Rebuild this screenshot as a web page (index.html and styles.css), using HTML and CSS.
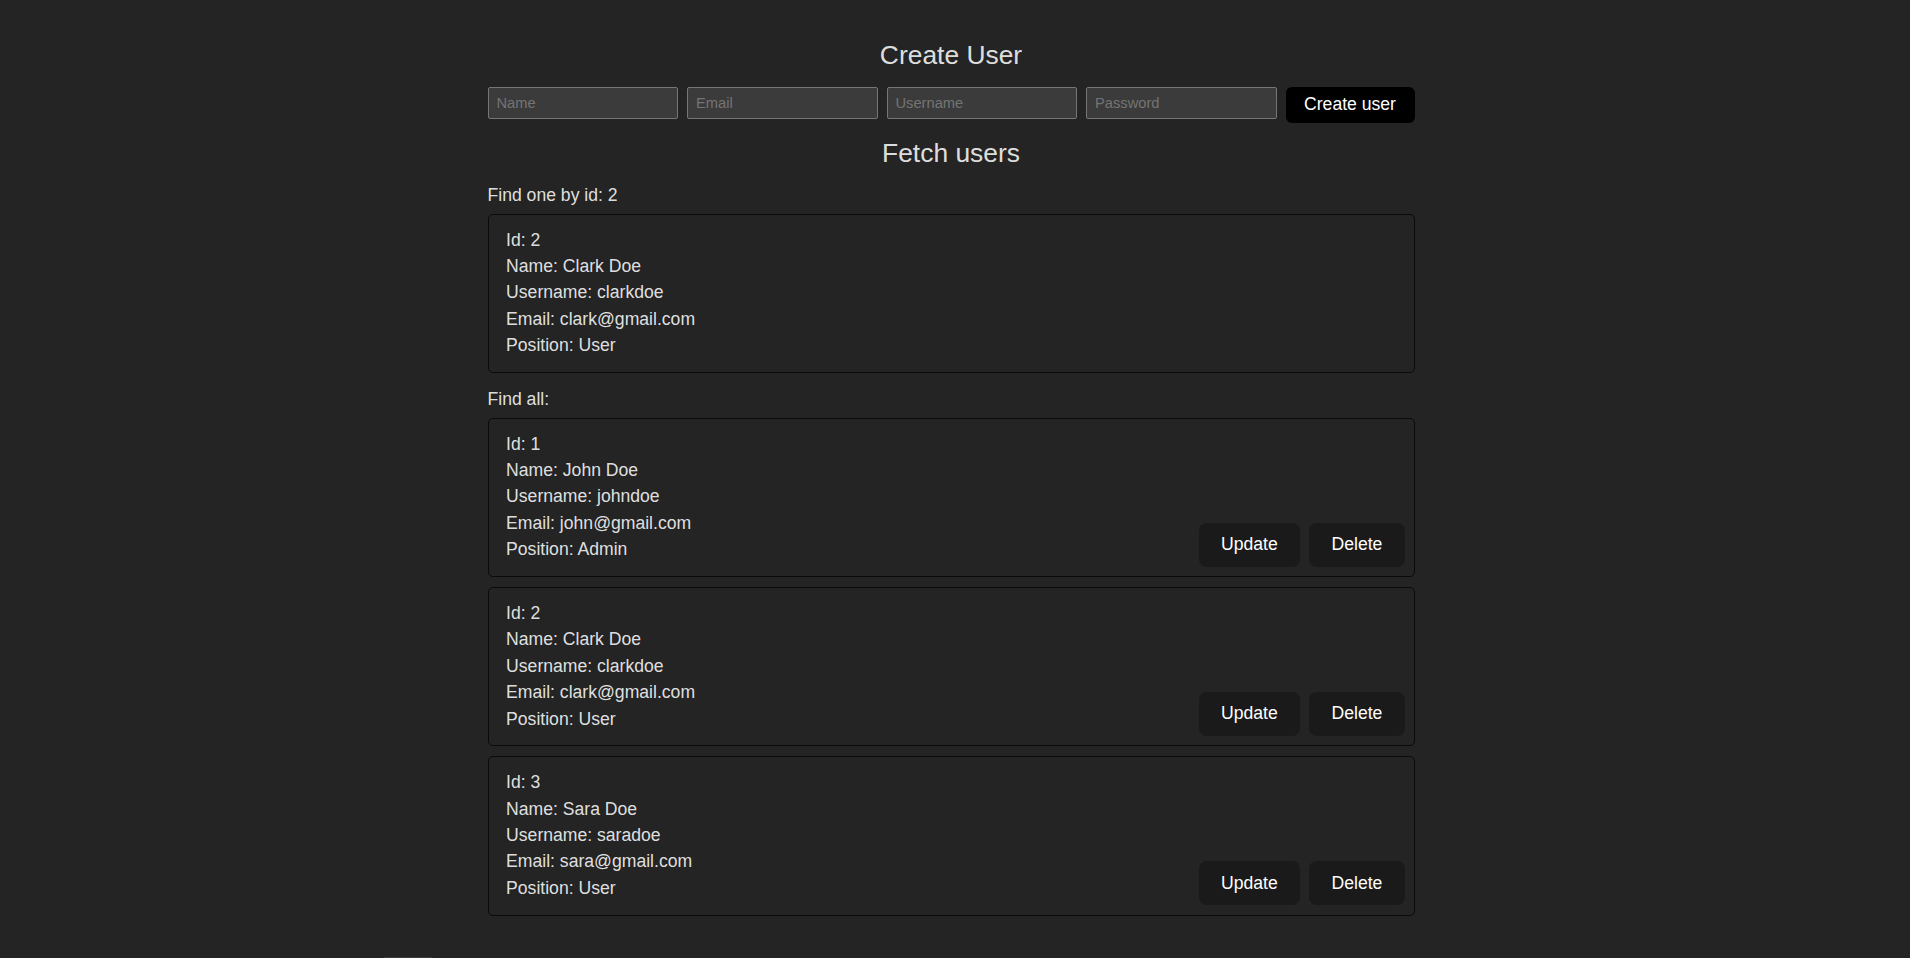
FILE: index.html
```html
<!DOCTYPE html>
<html lang="en">
<head>
<meta charset="utf-8">
<title>Users</title>
<link rel="stylesheet" href="styles.css">
</head>
<body>
<main class="app">
  <h1 class="title">Create User</h1>
  <form class="create-form">
    <input class="field" type="text" placeholder="Name">
    <input class="field" type="email" placeholder="Email">
    <input class="field" type="text" placeholder="Username">
    <input class="field" type="password" placeholder="Password">
    <button class="btn-create" type="button">Create user</button>
  </form>

  <h2 class="title title-fetch">Fetch users</h2>

  <p class="label">Find one by id: 2</p>
  <div class="card">
    <div class="info">
      <div>Id: 2</div>
      <div>Name: Clark Doe</div>
      <div>Username: clarkdoe</div>
      <div>Email: clark@gmail.com</div>
      <div>Position: User</div>
    </div>
  </div>

  <p class="label label-all">Find all:</p>
  <div class="card">
    <div class="info">
      <div>Id: 1</div>
      <div>Name: John Doe</div>
      <div>Username: johndoe</div>
      <div>Email: john@gmail.com</div>
      <div>Position: Admin</div>
    </div>
    <div class="actions">
      <button class="btn" type="button">Update</button>
      <button class="btn" type="button">Delete</button>
    </div>
  </div>
  <div class="card">
    <div class="info">
      <div>Id: 2</div>
      <div>Name: Clark Doe</div>
      <div>Username: clarkdoe</div>
      <div>Email: clark@gmail.com</div>
      <div>Position: User</div>
    </div>
    <div class="actions">
      <button class="btn" type="button">Update</button>
      <button class="btn" type="button">Delete</button>
    </div>
  </div>
  <div class="card">
    <div class="info">
      <div>Id: 3</div>
      <div>Name: Sara Doe</div>
      <div>Username: saradoe</div>
      <div>Email: sara@gmail.com</div>
      <div>Position: User</div>
    </div>
    <div class="actions">
      <button class="btn" type="button">Update</button>
      <button class="btn" type="button">Delete</button>
    </div>
  </div>
</main>
<div class="edge-strip"></div>
</body>
</html>
```
FILE: styles.css
```css
html, body {
  margin: 0;
  padding: 0;
}

body {
  background: #242424;
  color: rgba(255, 255, 255, 0.87);
  font-family: "Liberation Sans", Arial, Helvetica, sans-serif;
  font-size: 17.6px;
  line-height: 26.4px;
  overflow: hidden;
}

.app {
  width: 927px;
  margin-left: calc(50% - 467.5px);
  padding-top: 36px;
}

.title {
  margin: 0;
  font-size: 26.4px;
  font-weight: normal;
  line-height: 39.6px;
  text-align: center;
}

.create-form {
  display: flex;
  align-items: flex-start;
  gap: 9px;
  margin: 11.4px 0 0;
}

.field {
  flex: 1;
  min-width: 0;
  box-sizing: border-box;
  height: 32px;
  margin: 0;
  padding: 0 8px;
  background: #3b3b3b;
  border: 1px solid #767676;
  border-radius: 2px;
  color: rgba(255, 255, 255, 0.87);
  font-family: "Liberation Sans", Arial, sans-serif;
  font-size: 14.7px;
}

.field::placeholder {
  color: #747474;
}

.btn-create {
  flex: none;
  box-sizing: border-box;
  width: 129px;
  height: 36px;
  padding: 0 18px;
  background: #000;
  color: #fff;
  border: 0;
  border-radius: 6px;
  font-family: "Liberation Sans", Arial, sans-serif;
  font-size: 17.6px;
}

.title-fetch {
  margin-top: 11.4px;
}

.label {
  margin: 7.6px 0 5.6px;
}

.label-all {
  margin-top: 13px;
  margin-bottom: 5.3px;
}

.card {
  display: flex;
  justify-content: space-between;
  align-items: flex-end;
  padding: 12px 9px 9.3px 17.6px;
  border: 1px solid #0a0a0a;
  border-radius: 5px;
}

.card + .card {
  margin-top: 10px;
}

.info {
  margin-bottom: 4px;
}

.actions {
  display: flex;
  gap: 9.6px;
}

.btn {
  padding: 10.56px 21.1px;
  background: #1a1a1a;
  color: #fff;
  border: 1px solid transparent;
  border-radius: 8px;
  font-family: "Liberation Sans", Arial, sans-serif;
  font-size: 17.6px;
  line-height: normal;
}

.edge-strip {
  position: fixed;
  left: 384px;
  bottom: 0;
  width: 48px;
  height: 1px;
  background: #3d3d3d;
}
```
